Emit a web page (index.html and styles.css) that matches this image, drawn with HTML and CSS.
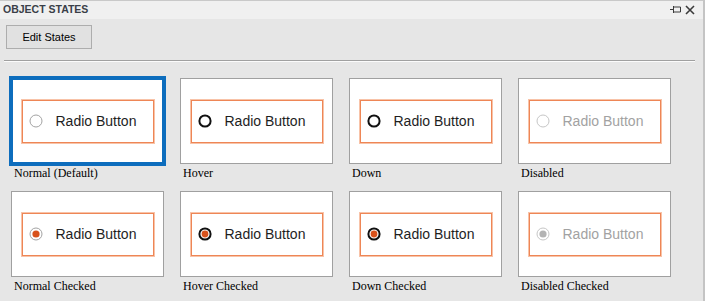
FILE: index.html
```html
<!DOCTYPE html>
<html lang="en">

<head>
    <meta charset="UTF-8">
    <title>Object States</title>
    <link rel="stylesheet" href="styles.css">
</head>

<body>
    <div class="panel">
        <div class="titlebar">
            <span class="title">OBJECT STATES</span>
            <div class="tools">
                <svg width="11" height="10" viewBox="0 0 11 10">
                    <path d="M0 4.5H3.5M3.5 1V8M3.5 2H10.5V7H3.5" fill="none" stroke="#3a3a3a" stroke-width="1" />
                </svg>
                <svg width="10" height="10" viewBox="0 0 10 10">
                    <path d="M1 1L9 9M9 1L1 9" stroke="#3a3a3a" stroke-width="1.6" />
                </svg>
            </div>
        </div>

        <div class="toolbar">
            <button class="edit-btn">Edit States</button>
        </div>
        <hr class="sep">

        <div class="states">
            <div class="state">
                <div class="card selected">
                    <div class="radio">
                        <svg width="14" height="14" viewBox="0 0 14 14"><circle cx="7" cy="7" r="6" fill="#fff" stroke="#a3a3a3" /></svg>
                        <span>Radio Button</span>
                    </div>
                </div>
                <div class="label">Normal (Default)</div>
            </div>

            <div class="state">
                <div class="card">
                    <div class="radio">
                        <svg width="14" height="14" viewBox="0 0 14 14"><circle cx="7" cy="7" r="5.6" fill="#fff" stroke="#111" stroke-width="2" /></svg>
                        <span>Radio Button</span>
                    </div>
                </div>
                <div class="label">Hover</div>
            </div>

            <div class="state">
                <div class="card">
                    <div class="radio">
                        <svg width="14" height="14" viewBox="0 0 14 14"><circle cx="7" cy="7" r="5.6" fill="#fff" stroke="#111" stroke-width="2" /></svg>
                        <span>Radio Button</span>
                    </div>
                </div>
                <div class="label">Down</div>
            </div>

            <div class="state">
                <div class="card">
                    <div class="radio disabled">
                        <svg width="14" height="14" viewBox="0 0 14 14"><circle cx="7" cy="7" r="6" fill="#fff" stroke="#c6c6c6" /></svg>
                        <span>Radio Button</span>
                    </div>
                </div>
                <div class="label">Disabled</div>
            </div>

            <div class="state">
                <div class="card">
                    <div class="radio">
                        <svg width="14" height="14" viewBox="0 0 14 14"><circle cx="7" cy="7" r="6" fill="#fff" stroke="#a3a3a3" /><circle cx="7" cy="7" r="3.6" fill="#d8521c" /></svg>
                        <span>Radio Button</span>
                    </div>
                </div>
                <div class="label">Normal Checked</div>
            </div>

            <div class="state">
                <div class="card">
                    <div class="radio">
                        <svg width="14" height="14" viewBox="0 0 14 14"><circle cx="7" cy="7" r="5.6" fill="#fff" stroke="#111" stroke-width="2" /><circle cx="7" cy="7" r="3.4" fill="#d8521c" /></svg>
                        <span>Radio Button</span>
                    </div>
                </div>
                <div class="label">Hover Checked</div>
            </div>

            <div class="state">
                <div class="card">
                    <div class="radio">
                        <svg width="14" height="14" viewBox="0 0 14 14"><circle cx="7" cy="7" r="5.6" fill="#fff" stroke="#111" stroke-width="2" /><circle cx="7" cy="7" r="3.4" fill="#d8521c" /></svg>
                        <span>Radio Button</span>
                    </div>
                </div>
                <div class="label">Down Checked</div>
            </div>

            <div class="state">
                <div class="card">
                    <div class="radio disabled">
                        <svg width="14" height="14" viewBox="0 0 14 14"><circle cx="7" cy="7" r="6" fill="#fff" stroke="#c6c6c6" /><circle cx="7" cy="7" r="3.6" fill="#b3b3b3" /></svg>
                        <span>Radio Button</span>
                    </div>
                </div>
                <div class="label">Disabled Checked</div>
            </div>
        </div>
    </div>
</body>

</html>
```

FILE: styles.css
```css
* {
    margin: 0;
    padding: 0;
    box-sizing: border-box;
}

html,
body {
    width: 705px;
    height: 301px;
    overflow: hidden;
    background-color: #e6e6e6;
}

.panel {
    height: 301px;
    border-right: 2px solid #c4c4c4;
}

.titlebar {
    height: 19px;
    border-top: 1px solid #c9c9c9;
    background-color: #f0f0f0;
    display: flex;
    justify-content: space-between;
    padding: 0 8px 0 3px;
}

.titlebar .title {
    font-family: "Liberation Sans", Arial, sans-serif;
    font-weight: bold;
    font-size: 10.5px;
    line-height: 12px;
    margin-top: 2px;
    color: #3a3f48;
}

.tools {
    display: flex;
    align-items: center;
    gap: 4px;
    padding-bottom: 1px;
}

.tools svg {
    display: block;
}

.toolbar {
    padding: 6px 0 0 6px;
}

.edit-btn {
    width: 86px;
    height: 24px;
    border: 1px solid #adadad;
    background-color: #e1e1e1;
    font-family: "Liberation Sans", Arial, sans-serif;
    font-size: 11px;
    color: #000;
}

.sep {
    height: 2px;
    margin: 11px 8px 0 4px;
    border: none;
    border-top: 1px solid #a0a0a0;
    border-bottom: 1px solid #fbfbfb;
}

.states {
    display: grid;
    grid-template-columns: repeat(4, 153px);
    column-gap: 16px;
    padding: 16px 0 0 11px;
}

.card {
    height: 86px;
    border: 1px solid #a0a0a0;
    background-color: #fff;
    display: flex;
    align-items: center;
    justify-content: center;
}

.card.selected {
    outline: 4px solid #0d6dbd;
    outline-offset: -2px;
}

.label {
    height: 27px;
    padding: 2px 0 0 3px;
    font-family: "Liberation Serif", "Times New Roman", serif;
    font-size: 12px;
    line-height: 14px;
    color: #000;
}

.radio {
    width: 132px;
    height: 43px;
    border: 1px solid #ee8656;
    box-shadow: 0 0 0 1px #f8c3a8;
    display: flex;
    align-items: center;
    gap: 13px;
    padding-left: 6px;
    font-family: "Liberation Sans", Arial, sans-serif;
    font-size: 14px;
    color: #1e1e1e;
}

.radio svg {
    display: block;
    flex: none;
}

.radio.disabled {
    color: #a2a2a2;
}
```
